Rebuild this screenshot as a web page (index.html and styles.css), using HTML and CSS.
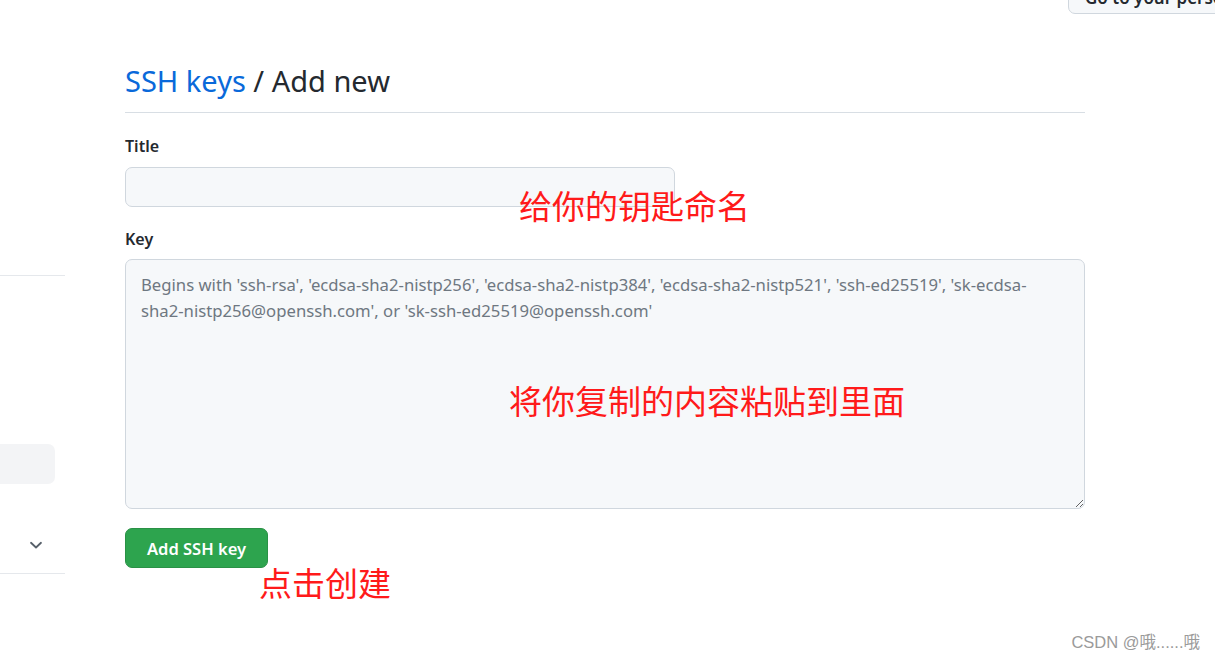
FILE: index.html
```html
<!DOCTYPE html>
<html lang="zh-CN">
<head>
<meta charset="utf-8">
<title>SSH keys / Add new</title>
<link rel="stylesheet" href="styles.css">
</head>
<body>
<div class="top">
  <button class="profile-btn">Go to your personal profile</button>
</div>
<div class="layout">
  <aside class="sidebar">
    <div class="side-rule side-rule-a"></div>
    <div class="side-item"></div>
    <div class="side-toggle">
      <svg width="16" height="16" viewBox="0 0 16 16"><path d="M3 5.75 8 10.5l5-4.75" fill="none" stroke="#57606a" stroke-width="1.8" stroke-linecap="round" stroke-linejoin="round"/></svg>
    </div>
    <div class="side-rule"></div>
  </aside>
  <main class="main">
    <h2 class="subhead"><a class="crumb" href="#">SSH keys</a> / Add new</h2>
    <form class="form">
      <label class="label" for="title">Title</label>
      <input id="title" class="input" type="text">
      <label class="label label-key" for="key">Key</label>
      <textarea id="key" class="textarea" placeholder="Begins with 'ssh-rsa', 'ecdsa-sha2-nistp256', 'ecdsa-sha2-nistp384', 'ecdsa-sha2-nistp521', 'ssh-ed25519', 'sk-ecdsa-&#10;sha2-nistp256@openssh.com', or 'sk-ssh-ed25519@openssh.com'"></textarea>
      <div class="actions"><button type="button" class="btn-primary">Add SSH key</button></div>
    </form>
    <span class="note note-title">给你的钥匙命名</span>
    <span class="note note-key">将你复制的内容粘贴到里面</span>
    <span class="note note-btn">点击创建</span>
  </main>
</div>
<div class="watermark">CSDN @哦......哦</div>
</body>
</html>
```

FILE: styles.css
```css
html, body {
  margin: 0;
  padding: 0;
  background: #ffffff;
}
body {
  font-family: "Noto Sans", "Liberation Sans", "Noto Sans CJK SC", sans-serif;
  color: #24292f;
  width: 1215px;
  height: 661px;
  overflow: hidden;
  position: relative;
}
.top {
  height: 14px;
  display: flex;
  justify-content: flex-end;
  align-items: flex-end;
  overflow: hidden;
}
.profile-btn {
  flex: none;
  box-sizing: border-box;
  width: 200px;
  height: 36px;
  margin-right: -53px;
  border: 1px solid #d0d7de;
  border-radius: 7px;
  background: #f6f8fa;
  font-family: "Noto Sans", sans-serif;
  font-size: 17px;
  font-weight: 600;
  line-height: 20px;
  color: #24292f;
  text-align: left;
  white-space: nowrap;
  overflow: hidden;
  padding: 0 0 5px 16px;
  display: flex;
  align-items: flex-end;
}
.layout {
  display: flex;
  align-items: flex-start;
}
.sidebar {
  width: 65px;
  flex: none;
  display: flex;
  flex-direction: column;
  padding-top: 261px;
}
.side-rule {
  height: 1px;
  background: #e5e8ec;
}
.side-item {
  margin-top: 168px;
  width: 55px;
  height: 40px;
  background: #f3f4f6;
  border-radius: 0 7px 7px 0;
}
.side-toggle {
  height: 56px;
  margin-top: 33px;
  display: flex;
  align-items: center;
  justify-content: flex-end;
  padding-right: 21px;
}
.main {
  position: relative;
  width: 960px;
  margin-left: 60px;
  flex: none;
}
.subhead {
  margin: 0;
  padding-top: 48px;
  padding-bottom: 12px;
  border-bottom: 1px solid #d8dee4;
  font-size: 29px;
  font-weight: 400;
  line-height: 38px;
  color: #24292f;
}
.crumb {
  color: #0969da;
  text-decoration: none;
}
.form {
  display: flex;
  flex-direction: column;
  align-items: flex-start;
  padding-top: 22px;
}
.label {
  font-size: 16px;
  font-weight: 600;
  line-height: 22px;
  margin-bottom: 10px;
}
.label-key {
  margin-top: 21px;
  margin-bottom: 9px;
}
.input {
  box-sizing: border-box;
  width: 550px;
  height: 40px;
  border: 1px solid #d0d7de;
  border-radius: 7px;
  background: #f6f8fa;
  margin: 0;
}
.textarea {
  box-sizing: border-box;
  width: 960px;
  height: 250px;
  margin: 0;
  padding: 12px 15px;
  border: 1px solid #d0d7de;
  border-radius: 7px;
  background: #f6f8fa;
  font-family: "Noto Sans", sans-serif;
  font-size: 16.7px;
  line-height: 26px;
  resize: vertical;
}
.textarea::placeholder {
  color: #6e7781;
}
.actions {
  margin-top: 19px;
}
.btn-primary {
  box-sizing: border-box;
  width: 143px;
  height: 40px;
  border: 1px solid #2a9146;
  border-radius: 7px;
  background: #2da44e;
  color: #ffffff;
  font-family: "Noto Sans", sans-serif;
  font-size: 16.5px;
  font-weight: 600;
  padding: 0;
}
.note {
  position: absolute;
  font-family: "Noto Sans CJK SC", sans-serif;
  font-size: 33px;
  line-height: 40px;
  color: #ff1a1a;
  white-space: nowrap;
}
.note-title { left: 394px; top: 171px; }
.note-key { left: 384px; top: 366px; }
.note-btn { left: 134px; top: 548px; }
.watermark {
  position: absolute;
  right: 15px;
  bottom: 8px;
  font-family: "Liberation Sans", "Noto Sans CJK SC", sans-serif;
  font-size: 16.5px;
  color: #9a9a9a;
}
```
